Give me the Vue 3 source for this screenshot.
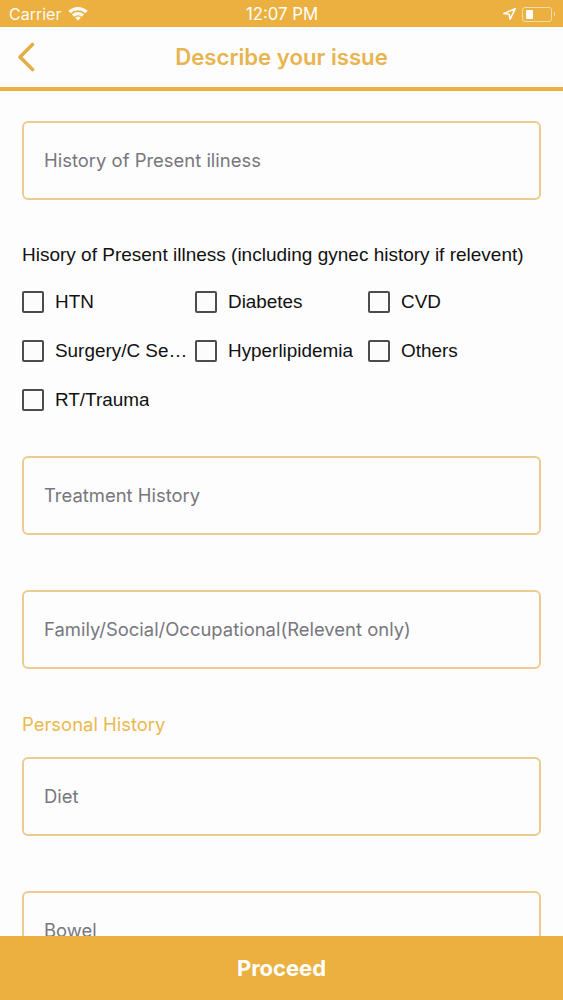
<script setup>
const options = ['HTN', 'Diabetes', 'CVD', 'Surgery/C Section', 'Hyperlipidemia', 'Others', 'RT/Trauma']
</script>

<template>
  <div class="screen">
    <header class="status">
      <div class="status-left">
        <span>Carrier</span>
        <svg class="wifi" viewBox="0 0 20 15" width="20" height="15">
          <path d="M0.3 4.800 A14 14 0 0 1 19.700 4.800 L17.400 7.200 A10.600 10.600 0 0 0 2.600 7.200 Z" fill="#fff" />
          <path d="M3.900 8.400 A9 9 0 0 1 16.100 8.400 L13.900 10.700 A5.800 5.800 0 0 0 6.100 10.700 Z" fill="#fff" />
          <path d="M7.200 11.800 A4 4 0 0 1 12.800 11.800 L10 14.800 Z" fill="#fff" />
        </svg>
      </div>
      <span class="time">12:07 PM</span>
      <div class="status-right">
        <svg viewBox="0 0 13 12" width="13" height="12">
          <path d="M12.300 0.600 L0.700 5.600 L6.200 6.200 L7 11.400 Z" fill="none" stroke="#fff" stroke-width="1.500" stroke-linejoin="round" />
        </svg>
        <div class="battery"><div class="charge"></div></div>
        <div class="nub"></div>
      </div>
    </header>

    <nav class="nav">
      <svg class="back" viewBox="0 0 18 30" width="18" height="30">
        <path d="M15.500 2.500 L3 15 L15.500 27.500" fill="none" stroke="#e3ae47" stroke-width="3.600" stroke-linecap="round" stroke-linejoin="round" />
      </svg>
      <h1>Describe your issue</h1>
    </nav>

    <main class="content">
      <div class="field">History of Present iliness</div>
      <p class="label">Hisory of Present illness (including gynec history if relevent)</p>
      <div class="options">
        <div v-for="o in options" :key="o" class="option">
          <span class="box"></span>
          <span class="option-text">{{ o }}</span>
        </div>
      </div>
      <div class="field treatment">Treatment History</div>
      <div class="field family">Family/Social/Occupational(Relevent only)</div>
      <p class="section">Personal History</p>
      <div class="field">Diet</div>
      <div class="field bowel">Bowel</div>
    </main>

    <footer class="proceed">Proceed</footer>
  </div>
</template>

<style>
html, body { margin: 0; background: #fdfdfe; }
</style>

<style scoped>
.screen {
  position: relative;
  width: 563px;
  height: 1000px;
  overflow: hidden;
  background: #fdfdfe;
  font-family: "Liberation Sans", Arial, sans-serif;
  display: flex;
  flex-direction: column;
}
.status {
  height: 27px;
  flex: none;
  box-sizing: border-box;
  background: #ebb03f;
  color: #fff;
  font-family: Inter, sans-serif;
  display: grid;
  grid-template-columns: 1fr auto 1fr;
  align-items: center;
  padding: 1px 8px 0 9px;
}
.status-left { display: flex; align-items: center; gap: 7px; font-size: 16px; opacity: 0.95; }
.wifi { margin-top: -1px; }
.time { font-size: 16.800px; font-weight: 400; }
.status-right { display: flex; justify-content: flex-end; align-items: center; }
.status-right svg { margin-right: 6px; }
.battery {
  width: 30px;
  height: 15px;
  border: 1px solid rgba(255, 255, 255, 0.55);
  border-radius: 3px;
  padding: 2px 3px;
  box-sizing: border-box;
  display: flex;
}
.charge { width: 7px; background: #fff; border-radius: 1px; }
.nub { width: 1px; height: 4px; margin-left: 2px; background: rgba(255, 255, 255, 0.6); }
.nav {
  position: relative;
  height: 64px;
  box-sizing: border-box;
  flex: none;
  display: flex;
  align-items: center;
  justify-content: center;
  padding-bottom: 2px;
  border-bottom: 4px solid #ebb03f;
}
.back { position: absolute; left: 17px; top: 15px; }
h1 {
  margin: 0;
  font-family: Inter, sans-serif;
  font-size: 22.200px;
  font-weight: 600;
  color: #e8b44f;
}
.content {
  flex: 1;
  padding: 30px 22px 0;
  min-height: 0;
}
.field {
  height: 79px;
  box-sizing: border-box;
  border: 2px solid #eccb8e;
  border-radius: 6px;
  display: flex;
  align-items: center;
  padding-left: 20px;
  padding-bottom: 1px;
  font-family: Inter, sans-serif;
  font-size: 18.450px;
  color: #77777d;
  background: #fdfdfe;
}
.label {
  margin: 43px 0 0;
  height: 24px;
  line-height: 24px;
  font-size: 19px;
  color: #111;
  white-space: nowrap;
}
.options {
  margin-top: 10px;
  display: grid;
  grid-template-columns: 173px 173px 173px;
  grid-auto-rows: 49px;
}
.option { display: flex; align-items: center; gap: 11px; min-width: 0; padding-right: 6px; }
.box {
  flex: none;
  width: 22px;
  height: 22px;
  box-sizing: border-box;
  border: 2px solid #4c4c4c;
  border-radius: 2px;
  background: #fcfcfc;
}
.option-text {
  font-size: 18.900px;
  color: #111;
  white-space: nowrap;
  overflow: hidden;
  text-overflow: ellipsis;
}
.treatment { margin-top: 32px; }
.family { margin-top: 55px; }
.section {
  margin: 43px 0 0;
  height: 24px;
  line-height: 24px;
  font-family: Inter, sans-serif;
  font-size: 18.450px;
  color: #ebb94f;
}
.section + .field { margin-top: 21px; }
.bowel { margin-top: 55px; }
.proceed {
  position: absolute;
  left: 0;
  right: 0;
  bottom: 0;
  height: 64px;
  background: #ebb03f;
  color: #fff;
  font-family: Inter, sans-serif;
  font-size: 22px;
  font-weight: 700;
  display: flex;
  align-items: center;
  justify-content: center;
}
</style>
